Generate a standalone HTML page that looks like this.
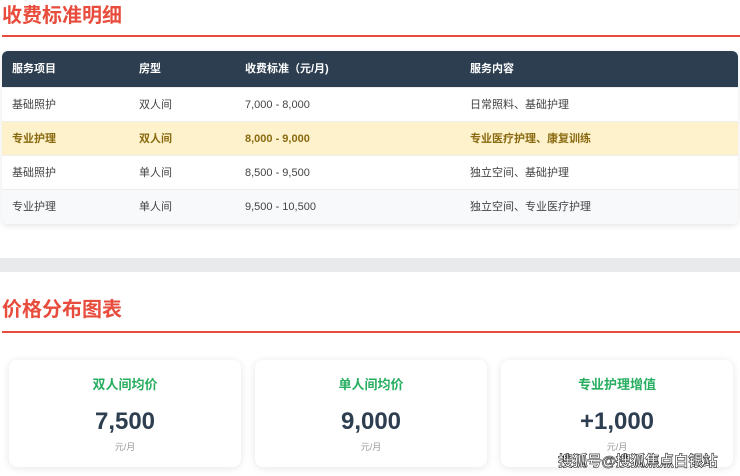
<!DOCTYPE html>
<html><head><meta charset="utf-8"><style>
*{margin:0;padding:0;box-sizing:border-box}
body{width:740px;height:476px;overflow:hidden;background:#fff;font-family:"Liberation Sans","Noto Sans CJK SC",sans-serif;position:relative}
h2{position:absolute;left:2px;font-size:20px;font-weight:bold;color:#e74c3c;line-height:24px}
.line{position:absolute;left:2px;width:738px;height:2px;background:#e74c3c}
.tbl{position:absolute;left:2px;top:51px;width:736px;border-radius:6px;overflow:hidden;box-shadow:0 2px 6px rgba(0,0,0,.1)}
.row{height:34px;position:relative;font-size:11px;color:#444;border-bottom:1px solid #eee}
.row span{position:absolute;top:0;line-height:34px}
.hd{background:#2c3e50;color:#fff;font-weight:bold;height:37px}
.hd span{line-height:37px}
.hl{background:#fdf2cc;color:#8a6a10;font-weight:bold}
.alt{background:#f7f9fb}
.c1{left:10px}.c2{left:137px}.c3{left:243px}.c4{left:468px}
.band{position:absolute;left:0;top:258px;width:740px;height:14px;background:#e8eaec}
.card{position:absolute;top:360px;width:232px;height:107px;background:#fff;border-radius:8px;box-shadow:0 1px 8px rgba(0,0,0,.1);text-align:center}
.card .t{margin-top:16px;font-size:13px;font-weight:bold;color:#27ae60;line-height:18px}
.card .v{margin-top:14px;font-size:24px;font-weight:bold;color:#2c3e50;line-height:28px}
.card .u{margin-top:4px;font-size:9px;color:#999}
.wm{position:absolute;left:558px;top:450px;font-size:15px;color:#fff;font-weight:bold;-webkit-text-stroke:0.6px #222;letter-spacing:-0.5px}
</style></head><body>
<h2 style="top:4px">收费标准明细</h2>
<div class="line" style="top:35px"></div>
<div class="tbl">
<div class="row hd"><span class="c1">服务项目</span><span class="c2">房型</span><span class="c3">收费标准（元/月)</span><span class="c4">服务内容</span></div>
<div class="row"><span class="c1">基础照护</span><span class="c2">双人间</span><span class="c3">7,000 - 8,000</span><span class="c4">日常照料、基础护理</span></div>
<div class="row hl"><span class="c1">专业护理</span><span class="c2">双人间</span><span class="c3">8,000 - 9,000</span><span class="c4">专业医疗护理、康复训练</span></div>
<div class="row"><span class="c1">基础照护</span><span class="c2">单人间</span><span class="c3">8,500 - 9,500</span><span class="c4">独立空间、基础护理</span></div>
<div class="row alt" style="border-bottom:0"><span class="c1">专业护理</span><span class="c2">单人间</span><span class="c3">9,500 - 10,500</span><span class="c4">独立空间、专业医疗护理</span></div>
</div>
<div class="band"></div>
<h2 style="top:298px">价格分布图表</h2>
<div class="line" style="top:331px"></div>
<div class="card" style="left:9px"><div class="t">双人间均价</div><div class="v">7,500</div><div class="u">元/月</div></div>
<div class="card" style="left:255px"><div class="t">单人间均价</div><div class="v">9,000</div><div class="u">元/月</div></div>
<div class="card" style="left:501px"><div class="t">专业护理增值</div><div class="v">+1,000</div><div class="u">元/月</div></div>
<div class="wm">搜狐号@搜狐焦点白银站</div>
</body></html>
